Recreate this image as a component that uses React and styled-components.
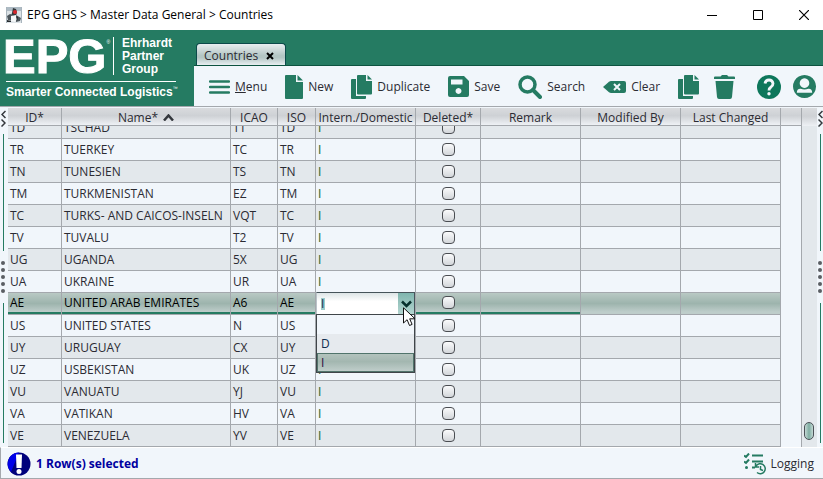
import React, { useLayoutEffect, useRef } from 'react';
import styled, { createGlobalStyle, css } from 'styled-components';

const GREEN = '#257b62';
const LINE = '#a4a8ad';
const PANEL = '#f1f6fb';

const COLUMNS = [
  { label: 'ID*', width: 54 },
  { label: 'Name*', width: 169, sorted: true },
  { label: 'ICAO', width: 47 },
  { label: 'ISO', width: 38 },
  { label: 'Intern./Domestic', width: 100 },
  { label: 'Deleted*', width: 65 },
  { label: 'Remark', width: 100 },
  { label: 'Modified By', width: 100 },
  { label: 'Last Changed', width: 100 }
];

const COUNTRIES = [
  ['TD', 'TSCHAD', 'TT'],
  ['TR', 'TUERKEY', 'TC'],
  ['TN', 'TUNESIEN', 'TS'],
  ['TM', 'TURKMENISTAN', 'EZ'],
  ['TC', 'TURKS- AND CAICOS-INSELN', 'VQT'],
  ['TV', 'TUVALU', 'T2'],
  ['UG', 'UGANDA', '5X'],
  ['UA', 'UKRAINE', 'UR'],
  ['AE', 'UNITED ARAB EMIRATES', 'A6'],
  ['US', 'UNITED STATES', 'N'],
  ['UY', 'URUGUAY', 'CX'],
  ['UZ', 'USBEKISTAN', 'UK'],
  ['VU', 'VANUATU', 'YJ'],
  ['VA', 'VATIKAN', 'HV'],
  ['VE', 'VENEZUELA', 'YV']
].map(([id, name, icao]) => ({ id, name, icao }));

const SELECTED = 'AE';

const GlobalStyles = createGlobalStyle`
  * {
    box-sizing: border-box;
  }

  body {
    margin: 0;
    background: ${PANEL};
    color: #2b2b33;
    font: 12px/16px "Open Sans", "Noto Sans", sans-serif;
  }

  button,
  select {
    font: inherit;
    color: inherit;
  }
`;

const Window = styled.div`
  display: flex;
  flex-direction: column;
  height: 100vh;
  overflow: hidden;
`;

const TitleBar = styled.header`
  display: flex;
  align-items: center;
  gap: 5px;
  height: 30px;
  padding-left: 6px;
  background: #fff;
  color: #000;
`;

const Title = styled.h1`
  flex: 1;
  margin: 0;
  font: inherit;
  white-space: nowrap;
`;

const WindowButtons = styled.div`
  display: flex;
`;

const WindowButton = styled.button`
  width: 46px;
  height: 30px;
  padding: 0;
  border: 0;
  background: none;
  line-height: 0;

  &:last-child {
    width: 42px;
    padding-left: 4px;
  }
`;

const Banner = styled.div`
  display: flex;
  height: 76px;
  background: ${GREEN};
`;

const Brand = styled.div`
  width: 194px;
  padding: 6px 0 0 6px;
  color: #fff;
  font-family: "Liberation Sans", Arial, sans-serif;
  font-weight: bold;
`;

const BrandTop = styled.div`
  display: flex;
  width: 170px;
  height: 46px;
  border-bottom: 1px solid #fff;
`;

const BrandMark = styled.span`
  display: flex;
  width: 107px;
  margin-left: -3px;
  font-size: 49px;
  line-height: 41px;
  -webkit-text-stroke: 1px #fff;
`;

const Mark = styled.sup`
  font-size: 5px;
  font-weight: normal;
  line-height: 12px;
  vertical-align: top;
  -webkit-text-stroke: 0;
`;

const BrandName = styled.span`
  height: 38px;
  margin: 1px 0 0 3px;
  padding-left: 8px;
  border-left: 1px solid #fff;
  font-size: 12px;
  line-height: 14px;

  span {
    display: block;
    margin-top: -1px;
  }
`;

const Tagline = styled.div`
  font-size: 12px;
  line-height: 20px;
  white-space: nowrap;
`;

const Workspace = styled.div`
  display: flex;
  flex: 1;
  flex-direction: column;
  min-width: 0;
`;

const Tabs = styled.div`
  display: flex;
  align-items: flex-end;
  height: 36px;
  padding-left: 2px;
  border-bottom: 1px solid #0d5340;
`;

const Tab = styled.div`
  display: flex;
  align-items: center;
  gap: 8px;
  height: 22px;
  padding: 3px 11px 0 7px;
  border: 1px solid #0c4a4a;
  border-bottom: 0;
  border-radius: 4px 4px 0 0;
  background: linear-gradient(#e9eef0, #b4c6c4 55%, #b4c6c4 65%, #e8eef1);
`;

const TabClose = styled.button`
  padding: 0;
  border: 0;
  background: none;
  line-height: 0;
`;

const Toolbar = styled.div`
  display: flex;
  flex: 1;
  align-items: center;
  gap: 18px;
  padding: 1px 7px 0 15px;
  background: ${PANEL};
`;

const ToolButton = styled.button`
  display: flex;
  align-items: center;
  gap: 5px;
  padding: 0;
  border: 0;
  background: none;
  white-space: nowrap;

  svg {
    flex: none;
    fill: ${GREEN};
  }
`;

const ToolGroup = styled.div`
  display: flex;
  align-items: center;
  gap: ${props => props.$gap}px;

  &:last-child {
    margin-left: auto;
  }
`;

const Main = styled.main`
  display: flex;
  flex: 1;
  min-height: 0;
  padding-top: 1px;
  border-top: 1px solid ${LINE};
`;

const SplitterBar = styled.div`
  display: flex;
  flex-direction: column;
  align-items: center;
  gap: 10px;
  width: ${props => props.$width}px;
  padding: 2px ${props => props.$width - 6}px 4px 0;
`;

const SplitterHalf = styled.div`
  display: flex;
  flex: 1 1 0;
  flex-direction: column;
  align-items: center;
  gap: 7px;
`;

const SplitterLine = styled.span`
  flex: 1;
  width: 1px;
  background: ${GREEN};
`;

const Scroller = styled.div`
  flex: 1;
  min-width: 0;
  overflow: auto;
  scrollbar-width: none;
`;

const Grid = styled.table`
  width: 100%;
  border-spacing: 0;
  table-layout: fixed;
`;

const headerFill = 'linear-gradient(#d9dbde, #ced1d5 45%, #dfe2e6 75%, #eef1f5)';

const HeadCell = styled.th`
  position: sticky;
  top: 0;
  z-index: 3;
  height: 18px;
  padding: 3px 0 0;
  border-right: 1px solid ${LINE};
  border-bottom: 1px solid ${LINE};
  background: ${headerFill};
  font-weight: normal;
  line-height: 14px;
  white-space: nowrap;

  &:last-child {
    border-right: 0;
  }

  svg {
    margin-left: 5px;
    vertical-align: 1px;
  }
`;

const Cell = styled.td`
  height: 22px;
  padding: 0 0 0 2px;
  border-right: 1px solid ${LINE};
  border-bottom: 1px solid ${LINE};
  line-height: 19px;
  white-space: nowrap;
`;

const DomesticCell = styled(Cell)`
  position: relative;
  color: #1c641f;
`;

const CheckCell = styled(Cell)`
  padding: 0;
  text-align: center;
`;

const Row = styled.tr`
  &:nth-child(odd) ${Cell} {
    background: #e3e8ec;
  }

  ${props => props.$selected && css`
    color: #000;

    && ${Cell} {
      padding-bottom: 2px;
      background: linear-gradient(#b9c9c4, #9db4ad 50%, #becdca 90%);
    }

    ${Cell}:nth-child(-n + 7) {
      box-shadow: inset 0 -2px ${GREEN};
    }
  `}
`;

const CheckBox = styled.input.attrs({ type: 'checkbox' })`
  display: block;
  width: 13px;
  height: 13px;
  margin: 0 auto;
  border: 1px solid #4a4d52;
  border-radius: 4px;
  background: linear-gradient(#fafbfc, #d3d6da);
  appearance: none;
`;

const Combo = styled.div`
  position: absolute;
  inset: -1px 0 -1px 0;
  z-index: 2;
  color: #102d50;
`;

const ComboSelect = styled.select`
  display: block;
  width: 100%;
  height: 23px;
  padding: 0 0 0 4px;
  border: 1px solid #46545a;
  border-left-color: #b9c4c8;
  border-radius: 0;
  outline: 0;
  background:
    linear-gradient(#9ccbca, #9ccbca) 4px 5px / 4px 12px no-repeat,
    linear-gradient(#dde5e6, #fff 40%);
  appearance: none;
`;

const ComboArrow = styled.span`
  position: absolute;
  top: 1px;
  right: 1px;
  display: grid;
  place-items: center;
  width: 16px;
  height: 21px;
  background: linear-gradient(#7fb5ae, #b3d5d0);
  pointer-events: none;
`;

const Options = styled.ul`
  position: absolute;
  top: 22px;
  right: 0;
  left: 0;
  margin: 0;
  padding: 0;
  border: 1px solid #3f4549;
  background: ${PANEL};
  list-style: none;
`;

const Option = styled.li`
  height: 19px;
  padding-left: 4px;
  line-height: 20px;
  background: ${props => (props.$alt ? '#e6eaee' : PANEL)};

  ${props => props.$active && css`
    padding-left: 3px;
    border: 1px solid #51746b;
    background: linear-gradient(#b3c3bd, #a3b7b0 45%, #bfcdca);
    color: #2c0d40;
    line-height: 17px;
  `}
`;

const Pointer = styled.svg`
  position: absolute;
  top: 15px;
  left: 87px;
`;

const ScrollTrack = styled.div`
  display: flex;
  flex-direction: column;
  align-items: center;
  justify-content: flex-end;
  width: 16px;
  padding: 0 1px 7px 0;
  border-left: 1px solid ${LINE};
  background: ${headerFill} top / 100% 18px no-repeat #e3e8ec;
`;

const ScrollThumb = styled.div`
  width: 10px;
  height: 18px;
  border: 1px solid #4b5157;
  border-radius: 5px;
  background: linear-gradient(90deg, #c5d9d5, #7fada2 50%, #c5d9d5);
`;

const StatusBar = styled.footer`
  display: flex;
  align-items: center;
  justify-content: space-between;
  height: 32px;
  padding: 1px 9px 0 6px;
  border-top: 1px solid #fff;
  border-bottom: 1px solid ${LINE};
  border-left: 1px solid ${LINE};
`;

const StatusText = styled.div`
  display: flex;
  align-items: center;
  gap: 5px;
  color: #0000a0;
  font-weight: bold;
`;

const JavaIcon = () => (
  <svg width="16" height="16" viewBox="0 0 16 16">
    <path d="M0 0h16v16H0z" fill="#dce2e6" />
    <path d="M0 0h16v4H0z" fill="#aebbc4" />
    <path d="M0 0h1v16H0zM15 0h1v16h-1z" fill="#a9b5bd" />
    <path d="M7 1l3 1 1 3-1 4H5l1-3z" fill="#33383c" />
    <path d="M1 9l3-2 3 1v6l-5-1zM10 8l5 3-1 3-4 1z" fill="#4c555b" />
    <path d="M5 9l5-1 1 4-2 3-4-1z" fill="#f5f7f8" />
    <path d="M1 13l4 1v1H1zM10 9l2 1-1 4z" fill="#24292c" />
    <circle cx="9" cy="5" r="2" fill="#d8262c" />
  </svg>
);

const PageIcon = () => (
  <svg width="18" height="24" viewBox="0 0 18 24">
    <path d="M1 0H11V7H18V23q0 1-1 1H1q-1 0-1-1V1q0-1 1-1z" />
    <path d="M12.500 0L18 5.500H12.500z" />
  </svg>
);

const CopyIcon = () => (
  <svg width="21" height="24" viewBox="0 0 21 24">
    <path d="M1 4H5V21H15V23q0 1-1 1H1q-1 0-1-1V5q0-1 1-1z" />
    <path d="M7 0H15V6H21V18.500q0 1-1 1H7q-1 0-1-1V1q0-1 1-1z" />
    <path d="M16.500 0L21 4.500H16.500z" />
  </svg>
);

const SaveIcon = () => (
  <svg width="21" height="21" viewBox="0 0 21 21">
    <path fillRule="evenodd" d="M2 0H16l5 5V19q0 2-2 2H2q-2 0-2-2V2Q0 0 2 0zM3 3.500V8.500H14.500V3.500zM10.500 12a3 3 0 1 0 .01 0z" />
  </svg>
);

const SearchIcon = () => (
  <svg width="24" height="24" viewBox="0 0 24 24">
    <circle cx="9.500" cy="9.500" r="7.500" style={{ fill: 'none' }} stroke={GREEN} strokeWidth="3.500" />
    <path d="M15 15l7 7" stroke={GREEN} strokeWidth="4" strokeLinecap="round" />
  </svg>
);

const ClearIcon = () => (
  <svg width="23" height="12" viewBox="0 0 23 12">
    <path d="M0 6L6 .7Q7 0 8 0H21q2 0 2 2V10q0 2-2 2H8q-1 0-2-.7z" />
    <path d="M11 3l6 6M17 3l-6 6" stroke={PANEL} strokeWidth="2" />
  </svg>
);

const TrashIcon = () => (
  <svg width="21" height="24" viewBox="0 0 21 24">
    <path d="M1 1.500H6.500L8 0h5l1.500 1.500H20q1 0 1 1V4H0V2.500q0-1 1-1zM1.500 6H19.500L18 22q-.2 2-2 2H5q-1.800 0-2-2z" />
  </svg>
);

const HelpIcon = () => (
  <svg width="24" height="24" viewBox="0 0 24 24">
    <circle cx="12" cy="12" r="12" style={{ fill: '#0d775b' }} />
    <path
      d="M8 8.500Q8.500 5 12 5t4 3.500q0 2-2 3.500-2 1.300-2 3.500"
      style={{ fill: 'none' }}
      stroke={PANEL}
      strokeWidth="2.800"
    />
    <circle cx="12" cy="18.700" r="1.700" style={{ fill: PANEL }} />
  </svg>
);

const UserIcon = () => (
  <svg width="23" height="23" viewBox="0 0 24 24">
    <path
      fillRule="evenodd"
      d="M12 0a12 12 0 1 0 .01 0zM12 3.500a5 5 0 1 1-.01 0zM4 18.500Q4 14 8 14.300q4 1.700 8 0 4-.3 4 4.200z"
    />
  </svg>
);

const AlertIcon = () => (
  <svg width="24" height="24" viewBox="0 0 24 24">
    <circle cx="12" cy="12" r="11.500" fill="#00007c" />
    <path d="M12 .5A11.500 11.500 0 0 0 4 20z" fill="#0000e8" />
    <path d="M9 2.500h6L14.500 16h-5z" fill="#fff" />
    <circle cx="12" cy="19.500" r="2.500" fill="#fff" />
  </svg>
);

const LoggingIcon = () => (
  <svg width="22" height="22" viewBox="0 0 22 22">
    <g style={{ fill: 'none' }} stroke={GREEN} strokeWidth="1.500">
      <path d="M0 2.500l2 1.500 3-3.500M0 8.500l2 1.500 3-3.500M8 2.500h11M8 8.500h11M8 14.500h3" strokeWidth="2" />
      <path d="M12 13a5 5 0 1 1 1 6.500M11.500 10v4H15M16.500 13v3.500l2.500 1" />
    </g>
    <circle cx="2.500" cy="14.500" r="1.500" />
  </svg>
);

const Splitter = ({ width }) => (
  <SplitterBar $width={width}>
    <SplitterHalf>
      <svg width="5" height="17" viewBox="0 0 5 17" fill="none" stroke="#33373c" strokeWidth="1.500">
        <path d="M4.500 1L1 4.500 4.500 8M.5 9.500L4 13 .5 16.500" />
      </svg>
      <SplitterLine />
    </SplitterHalf>
    <svg width="4" height="32" viewBox="0 0 4 32" fill="#5a5e63">
      {[2, 9, 16, 23, 30].map(y => <circle key={y} cx="2" cy={y} r="2" />)}
    </svg>
    <SplitterHalf>
      <SplitterLine />
    </SplitterHalf>
  </SplitterBar>
);

const DomesticCombo = () => (
  <Combo>
    <ComboSelect aria-label="Intern./Domestic" defaultValue="I">
      <option value="" />
      <option>D</option>
      <option>I</option>
    </ComboSelect>
    <ComboArrow>
      <svg width="11" height="8" viewBox="0 0 11 8" fill="none" stroke="#06302d" strokeWidth="2.500">
        <path d="M1 1.500L5.500 6 10 1.500" />
      </svg>
    </ComboArrow>
    <Options>
      <Option />
      <Option $alt>D</Option>
      <Option $active>I</Option>
    </Options>
    <Pointer width="13" height="20" viewBox="0 0 13 20">
      <path d="M.5 .8V16l3.600-3.300L6.500 18.500l2.600-1.100-2.400-5.600H12z" fill="#fff" stroke="#111" />
    </Pointer>
  </Combo>
);

const CountryTable = () => {
  const scroller = useRef(null);

  useLayoutEffect(() => {
    scroller.current.scrollTop = scroller.current.scrollHeight;
  }, []);

  return (
    <Scroller ref={scroller}>
      <Grid>
        <colgroup>
          {COLUMNS.map(col => <col key={col.label} width={col.width} />)}
          <col />
        </colgroup>
        <thead>
          <tr>
            {COLUMNS.map(col => (
              <HeadCell key={col.label}>
                {col.label}
                {col.sorted && (
                  <svg width="11" height="7" viewBox="0 0 11 7" fill="none" stroke="#33373c" strokeWidth="2.500">
                    <path d="M1 6.500L5.500 1.500 10 6.500" />
                  </svg>
                )}
              </HeadCell>
            ))}
            <HeadCell />
          </tr>
        </thead>
        <tbody>
          {COUNTRIES.map(country => (
            <Row key={country.id} $selected={country.id === SELECTED}>
              <Cell>{country.id}</Cell>
              <Cell>{country.name}</Cell>
              <Cell>{country.icao}</Cell>
              <Cell>{country.id}</Cell>
              <DomesticCell>
                {country.id === SELECTED ? <DomesticCombo /> : 'I'}
              </DomesticCell>
              <CheckCell><CheckBox aria-label={`Deleted ${country.id}`} /></CheckCell>
              <Cell />
              <Cell />
              <Cell />
              <td />
            </Row>
          ))}
        </tbody>
      </Grid>
    </Scroller>
  );
};

const App = () => (
  <Window>
    <GlobalStyles />

    <TitleBar>
      <JavaIcon />
      <Title>EPG GHS &gt; Master Data General &gt; Countries</Title>
      <WindowButtons>
        <WindowButton aria-label="Minimize">
          <svg width="10" height="10"><path d="M0 5.500h10" stroke="#000" /></svg>
        </WindowButton>
        <WindowButton aria-label="Maximize">
          <svg width="10" height="10"><path d="M.5 .5h9v9h-9z" fill="none" stroke="#000" /></svg>
        </WindowButton>
        <WindowButton aria-label="Close">
          <svg width="10" height="10"><path d="M0 0l10 10M10 0L0 10" stroke="#000" strokeWidth="1.200" /></svg>
        </WindowButton>
      </WindowButtons>
    </TitleBar>

    <Banner>
      <Brand>
        <BrandTop>
          <BrandMark>EPG<Mark>®</Mark></BrandMark>
          <BrandName>
            <span>Ehrhardt</span>
            <span>Partner</span>
            <span>Group</span>
          </BrandName>
        </BrandTop>
        <Tagline>Smarter Connected Logistics<Mark>™</Mark></Tagline>
      </Brand>
      <Workspace>
        <Tabs>
          <Tab>
            Countries
            <TabClose aria-label="Close Countries">
              <svg width="8" height="8"><path d="M1 1l6 6M7 1L1 7" stroke="#000" strokeWidth="2" /></svg>
            </TabClose>
          </Tab>
        </Tabs>
        <Toolbar>
          <ToolButton>
            <svg width="21" height="14">
              <path d="M1 1.500h19M1 7h19M1 12.500h19" stroke={GREEN} strokeWidth="2.500" strokeLinecap="round" />
            </svg>
            <span><u>M</u>enu</span>
          </ToolButton>
          <ToolButton><PageIcon />New</ToolButton>
          <ToolButton><CopyIcon />Duplicate</ToolButton>
          <ToolButton><SaveIcon />Save</ToolButton>
          <ToolButton><SearchIcon />Search</ToolButton>
          <ToolButton><ClearIcon />Clear</ToolButton>
          <ToolGroup $gap={15}>
            <ToolButton aria-label="Copy"><CopyIcon /></ToolButton>
            <ToolButton aria-label="Delete"><TrashIcon /></ToolButton>
          </ToolGroup>
          <ToolGroup $gap={12}>
            <ToolButton aria-label="Help"><HelpIcon /></ToolButton>
            <ToolButton aria-label="User"><UserIcon /></ToolButton>
          </ToolGroup>
        </Toolbar>
      </Workspace>
    </Banner>

    <Main>
      <Splitter width={8} />
      <CountryTable />
      <ScrollTrack><ScrollThumb /></ScrollTrack>
      <Splitter width={6} />
    </Main>

    <StatusBar>
      <StatusText>
        <AlertIcon />
        1 Row(s) selected
      </StatusText>
      <ToolButton><LoggingIcon />Logging</ToolButton>
    </StatusBar>
  </Window>
);

export default App;
